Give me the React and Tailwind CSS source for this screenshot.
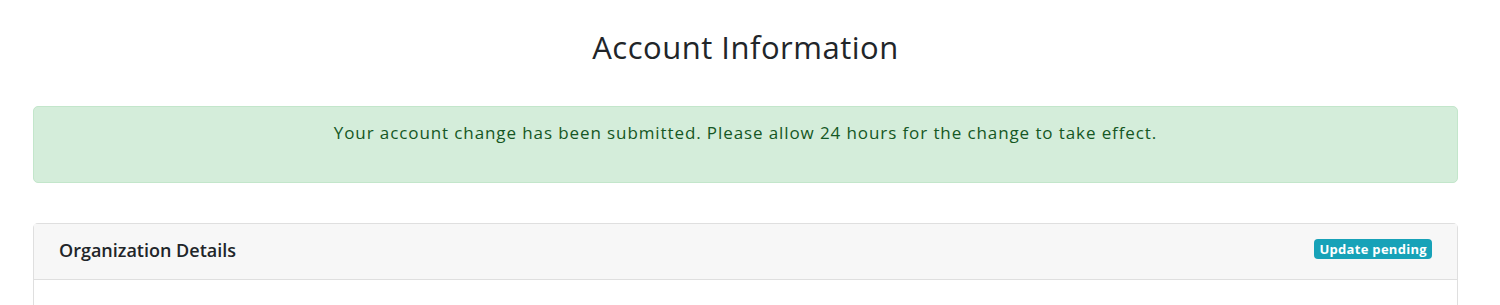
import React from "react";

const App = () => {
  return (
    <div className="min-h-[305px] bg-white pl-[33px] pr-[42px] pt-[26px] text-[#212529]" style={{ fontFamily: "'Open Sans', 'Noto Sans', sans-serif" }}>
      {/* Page title */}
      <h1 className="text-center text-[31px] leading-[42px] font-normal tracking-[0.5px] text-[#212529]">Account Information</h1>

      {/* Success alert */}
      <div className="mt-[38px] h-[77px] rounded-[5px] border border-[#c3e6cb] bg-[#d4edda] pt-[14px] text-center">
        <p className="text-[17px] leading-[24px] tracking-[0.9px] text-[#155724]">
          Your account change has been submitted. Please allow 24 hours for the change to take effect.
        </p>
      </div>

      {/* Card */}
      <div className="mt-[40px] rounded-t-[5px] border border-b-0 border-[#dfdfdf]">
        <div className="flex h-[56px] items-center justify-between border-b border-[#dfdfdf] bg-[#f7f7f7] pl-[25px] pr-[25px]">
          <h2 className="mb-[2px] text-[18px] font-semibold text-[#212529]">Organization Details</h2>
          <span className="mb-[5px] rounded-[4px] bg-[#17a2b8] px-[5px] py-[1px] text-[13px] font-bold leading-[18px] tracking-[0.3px] text-white">
            Update pending
          </span>
        </div>
        <div className="h-[40px] bg-white"></div>
      </div>
    </div>
  );
};

export default App;
